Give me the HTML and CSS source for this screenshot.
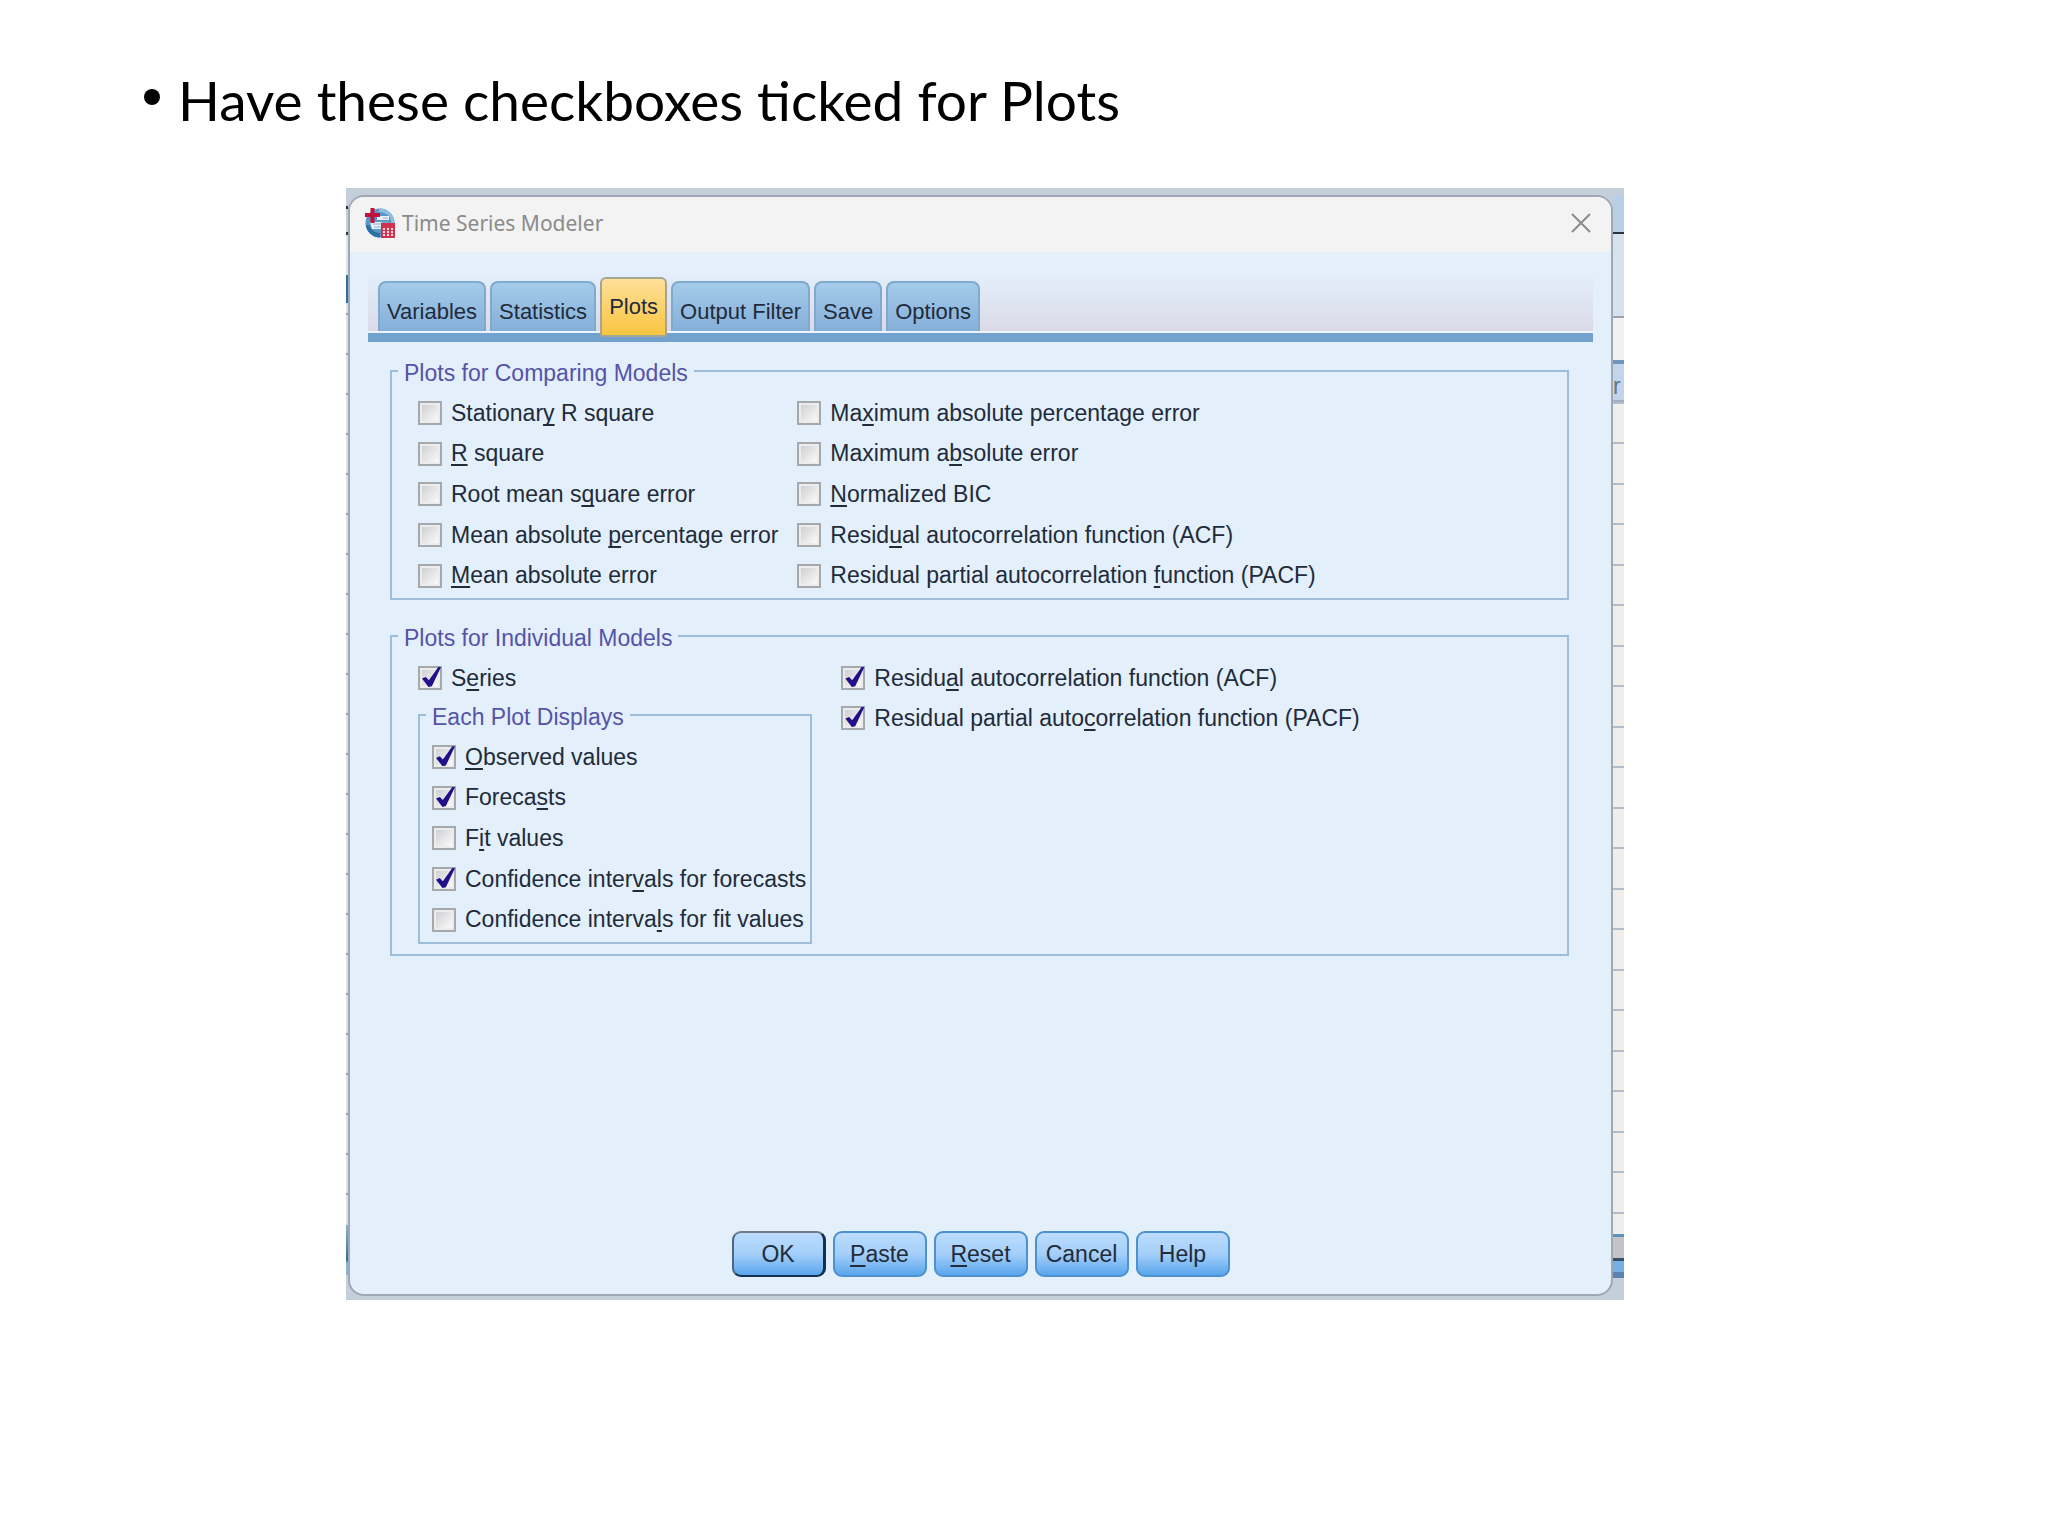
FILE: index.html
```
<!DOCTYPE html>
<html lang="en">
<head>
    <meta charset="UTF-8">
    <meta name="viewport" content="width=device-width, initial-scale=1.0">
    <title>Time Series Modeler - Plots</title>
    <link rel="stylesheet" href="styles.css">
</head>
<body>
    <main class="slide">
        <ul class="points">
            <li>Have these checkboxes ticked for Plots</li>
        </ul>

        <div class="backdrop">
            <div class="edge edge-left"></div>
            <div class="dialog" role="dialog" aria-labelledby="dialog-title">
                <header class="titlebar">
                    <svg class="app-icon" viewBox="0 0 30 30" aria-hidden="true">
                        <circle cx="15" cy="15" r="14.5" fill="#5a96c4"/>
                        <path d="M15 .5A14.5 14.5 0 0 1 29.500 15h-3A12 12 0 0 0 13 4z" fill="#8fbede"/>
                        <path d="M1 17a14 14 0 0 0 14 12.500V25C10 25 6 22 4 17z" fill="#2d6ea3"/>
                        <path d="M12 8h12v4H12zM5 14h12v7H7z" fill="#e9f2fa"/>
                        <path d="M15 14h9M8 16h8M9 19h7M18 10h5" stroke="#87aed0" stroke-width="1"/>
                        <path d="M5.500 0h4v5h5.500v4H9.500v6h-4V9H0V5h5.500z" fill="#c4113c"/>
                        <path d="M16 15h14v15H16z" fill="#cf3350"/>
                        <path d="M18 20h2v2h-2zm4 0h2v2h-2zm4 0h2v2h-2zm-8 3h2v2h-2zm4 0h2v2h-2zm4 0h2v2h-2zm-8 3h2v2h-2zm4 0h2v2h-2zm4 0h2v2h-2z" fill="#f7dfe5"/>
                    </svg>
                    <h1 id="dialog-title">Time Series Modeler</h1>
                    <button type="button" class="close" aria-label="Close">
                        <svg viewBox="0 0 20 20" aria-hidden="true"><path d="M1 1l18 18M19 1L1 19" fill="none" stroke="#8b8b8b" stroke-width="2"/></svg>
                    </button>
                </header>

                <form class="content">
                    <div class="tabs" role="tablist">
                        <button type="button" class="tab" role="tab">Variables</button>
                        <button type="button" class="tab" role="tab">Statistics</button>
                        <button type="button" class="tab active" role="tab" aria-selected="true">Plots</button>
                        <button type="button" class="tab" role="tab">Output Filter</button>
                        <button type="button" class="tab" role="tab">Save</button>
                        <button type="button" class="tab" role="tab">Options</button>
                    </div>

                    <fieldset class="group comparing">
                        <legend>Plots for Comparing Models</legend>
                        <div class="columns">
                            <div class="rows">
                                <label><input type="checkbox"><span>Stationar<u>y</u> R square</span></label>
                                <label><input type="checkbox"><span><u>R</u> square</span></label>
                                <label><input type="checkbox"><span>Root mean s<u>q</u>uare error</span></label>
                                <label><input type="checkbox"><span>Mean absolute <u>p</u>ercentage error</span></label>
                                <label><input type="checkbox"><span><u>M</u>ean absolute error</span></label>
                            </div>
                            <div class="rows">
                                <label><input type="checkbox"><span>Ma<u>x</u>imum absolute percentage error</span></label>
                                <label><input type="checkbox"><span>Maximum a<u>b</u>solute error</span></label>
                                <label><input type="checkbox"><span><u>N</u>ormalized BIC</span></label>
                                <label><input type="checkbox"><span>Resid<u>u</u>al autocorrelation function (ACF)</span></label>
                                <label><input type="checkbox"><span>Residual partial autocorrelation <u>f</u>unction (PACF)</span></label>
                            </div>
                        </div>
                    </fieldset>

                    <fieldset class="group individual">
                        <legend>Plots for Individual Models</legend>
                        <div class="columns">
                            <div>
                                <label><input type="checkbox" checked><span>S<u>e</u>ries</span></label>
                                <fieldset class="group displays">
                                    <legend>Each Plot Displays</legend>
                                    <div class="rows">
                                        <label><input type="checkbox" checked><span><u>O</u>bserved values</span></label>
                                        <label><input type="checkbox" checked><span>Foreca<u>s</u>ts</span></label>
                                        <label><input type="checkbox"><span>F<u>i</u>t values</span></label>
                                        <label><input type="checkbox" checked><span>Confidence inter<u>v</u>als for forecasts</span></label>
                                        <label><input type="checkbox"><span>Confidence interva<u>l</u>s for fit values</span></label>
                                    </div>
                                </fieldset>
                            </div>
                            <div>
                                <label><input type="checkbox" checked><span>Residu<u>a</u>l autocorrelation function (ACF)</span></label>
                                <label><input type="checkbox" checked><span>Residual partial auto<u>c</u>orrelation function (PACF)</span></label>
                            </div>
                        </div>
                    </fieldset>

                    <div class="actions">
                        <button type="button" class="default">OK</button>
                        <button type="button"><u>P</u>aste</button>
                        <button type="button"><u>R</u>eset</button>
                        <button type="button">Cancel</button>
                        <button type="button">Help</button>
                    </div>
                </form>
            </div>
            <div class="edge edge-right"><span>r</span></div>
        </div>
    </main>
</body>
</html>
```
FILE: styles.css
```
* { margin: 0; padding: 0; box-sizing: border-box; }
body {
    min-height: 100vh;
    background: #fff;
    color: #222b3a;
    font-family: "Liberation Sans", Arial, sans-serif;
    font-size: 23px;
}
.slide {
    padding: 64px 424px 64px 346px;
}
.points {
    margin-left: -202px;
    list-style: none;
    color: #000;
    font-family: Lato, sans-serif;
    font-size: 55px;
    line-height: 72px;
}
.points li {
    display: flex;
    align-items: center;
    gap: 18px;
    white-space: nowrap;
}
.points li::before {
    content: "";
    width: 16px;
    height: 16px;
    margin-bottom: 6px;
    border-radius: 50%;
    background: #000;
}

/* main window showing behind the dialog */
.backdrop {
    display: flex;
    margin-top: 52px;
    padding: 7px 0 4px;
    background: #c5cedb;
}
.edge {
    flex: none;
    overflow: hidden;
}
.edge-left {
    width: 2px;
    background:
        linear-gradient(#c5cedb 11px, #333 11px 14px, #c5cedb 14px 37px, #333 37px 40px, #dbe3ec 40px 80px, #2f6fa8 80px 108px, transparent 108px),
        linear-gradient(transparent 1030px, #8fb0c8 1030px, #2f6f9f 1065px, #7fb5dd 1068px 1080px, #c5cedb 1080px),
        repeating-linear-gradient(#dcdfe4 0 38px, #9aa0a8 38px 40px);
}
.edge-right {
    width: 11px;
    padding-top: 178px;
    color: #66758a;
    background:
        linear-gradient(#b9cfe8 37px, #2b3440 37px 39px, #d8e2ef 39px 121px, #9ba4ae 121px 123px, #f3f1f0 123px 165px, #6f94c0 165px 169px, #c3d5ea 169px 205px, #9fb0c4 205px 207px, transparent 207px),
        linear-gradient(transparent 1039px, #5b93bf 1039px 1042px, #c4c3c8 1042px 1063px, #34506b 1063px 1066px, #74b0e2 1066px 1077px, #5b85b0 1077px 1083px, #c5cedb 1083px),
        repeating-linear-gradient(#efeeec 0 4px, #b3bccb 4px 6px, #efeeec 6px 45px, #b3bccb 45px 47px, #efeeec 47px 81px);
}
.dialog {
    flex: 1;
    display: flex;
    flex-direction: column;
    min-height: 1101px;
    border: 2px solid #9fa8b5;
    border-radius: 16px;
    background: #e3effb;
    overflow: hidden;
}
.titlebar {
    display: flex;
    align-items: center;
    height: 55px;
    padding: 0 20px 4px 15px;
    background: #f3f3f3;
}
.app-icon {
    width: 30px;
    height: 30px;
}
h1 {
    flex: 1;
    margin-left: 7px;
    color: #8b8b8b;
    font-family: "Noto Sans", sans-serif;
    font-size: 21px;
    font-weight: normal;
}
button {
    font: inherit;
    color: inherit;
}
.close {
    width: 20px;
    height: 20px;
    border: none;
    background: none;
}
.close svg { display: block; }
.content {
    flex: 1;
    display: flex;
    flex-direction: column;
    padding: 20px 18px 17px;
}

.tabs {
    display: flex;
    align-items: flex-end;
    gap: 4px;
    height: 70px;
    padding-left: 10px;
    border-bottom: 9px solid #73a2cf;
    background: linear-gradient(#e3effb, #dbd9e7);
    box-shadow: inset 0 -2px #edf4fc;
    font-size: 22px;
}
.tab {
    height: 50px;
    margin-bottom: 2px;
    padding: 10px 7px 0;
    border: 2px solid #7fa9cd;
    border-bottom: none;
    border-radius: 8px 8px 0 0;
    background: linear-gradient(#a4cbea, #84afd8);
}
.tab.active {
    height: 60px;
    margin-bottom: -4px;
    padding: 0 7px;
    border: 2px solid #a3a595;
    border-radius: 6px 6px 2px 2px;
    background: linear-gradient(#ffe09a, #f9c440);
}

.group {
    border: 2px solid #9dbedb;
}
legend {
    margin-left: 6px;
    padding: 4px 6px 0;
    color: #5653a8;
    line-height: 24px;
}
.comparing,
.individual {
    margin: 15px 24px 0 22px;
}
.individual { margin-top: 22px; }
.columns { display: flex; }
.rows {
    display: grid;
    grid-auto-rows: 1fr;
    min-height: 203px;
}
label {
    display: flex;
    align-items: center;
    gap: 9px;
    min-height: 40px;
    white-space: nowrap;
}
.comparing .columns {
    gap: 19px;
    padding: 8px 26px 2px;
}
.individual .columns {
    gap: 29px;
    padding: 8px 26px 10px;
}
.displays {
    margin-top: 3px;
    padding: 8px 0 2px;
}
.displays .rows { padding: 0 4px 0 12px; }
u {
    text-decoration-thickness: 2px;
    text-underline-offset: 3px;
    text-decoration-skip-ink: none;
}
input[type="checkbox"] {
    flex: none;
    appearance: none;
    width: 24px;
    height: 24px;
    border: 2px solid #a5a9ab;
    background: linear-gradient(135deg, #cfd0d2, #fafafa) content-box, #ececee;
    padding: 2px;
}
input[type="checkbox"]:checked::before {
    content: "";
    display: block;
    width: 19px;
    height: 20px;
    margin-top: -3px;
    background: #22108a;
    clip-path: polygon(0 58%, 20% 50%, 36% 66%, 86% 0, 100% 0, 52% 96%, 34% 100%);
}

.actions {
    display: flex;
    justify-content: center;
    gap: 7px;
    margin-top: auto;
}
.actions button {
    width: 94px;
    height: 46px;
    border: 2px solid #4c92d0;
    border-radius: 9px;
    background: linear-gradient(#bcdcff, #a4cffa 50%, #5ba6ec);
}
.actions .default {
    border-color: #6d7d8e #12304f #12304f #4b6785;
    border-right-width: 3px;
}
```
